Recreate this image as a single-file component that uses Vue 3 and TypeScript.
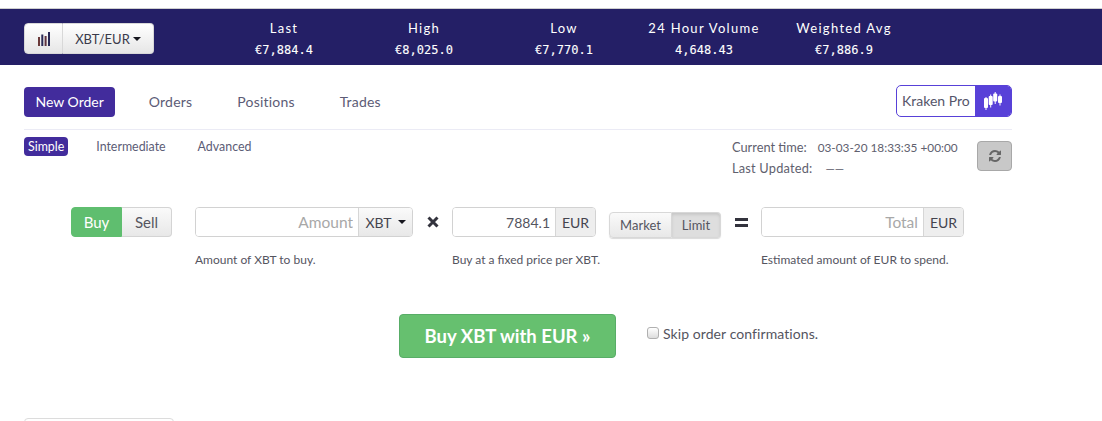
<template>
  <div class="page">
    <div class="ticker">
      <div class="pair-select">
        <button class="pair-chart">
          <svg viewBox="0 0 12 14" width="12" height="14">
            <rect x="0" y="5" width="2" height="9" fill="#6b3a3a" />
            <rect x="3.3" y="2.5" width="2" height="11.5" fill="#2a2a55" />
            <rect x="6.6" y="4" width="2" height="10" fill="#5f3440" />
            <rect x="10" y="0" width="2" height="14" fill="#2a2a55" />
          </svg>
        </button>
        <button class="pair-name">XBT/EUR<span class="caret"></span></button>
      </div>
      <div v-for="t in tickers" :key="t.label" class="stat">
        <div class="stat-label">{{ t.label }}</div>
        <div class="stat-value">{{ t.value }}</div>
      </div>
    </div>

    <div class="content">
      <div class="nav-row">
        <div class="tabs">
          <a v-for="(tab, i) in tabs" :key="tab" class="tab" :class="{ active: i === 0 }">{{ tab }}</a>
        </div>
        <div class="pro-link">
          <span class="pro-text">Kraken Pro</span>
          <span class="pro-icon">
            <svg viewBox="0 0 18 18" width="18" height="18" fill="#fff">
              <rect x="0" y="6" width="4" height="10" rx="1" />
              <rect x="1.5" y="5" width="1" height="13" />
              <rect x="4.7" y="4" width="4" height="9" rx="1" />
              <rect x="6.2" y="2.5" width="1" height="13" />
              <rect x="9.2" y="1.5" width="4" height="8" rx="1" />
              <rect x="10.7" y="0" width="1" height="12" />
              <rect x="14" y="4" width="4" height="7" rx="1" />
              <rect x="15.5" y="2.5" width="1" height="11" />
            </svg>
          </span>
        </div>
      </div>

      <div class="sub-row">
        <div class="levels">
          <a v-for="(lvl, i) in levels" :key="lvl" class="level" :class="{ active: i === 0 }">{{ lvl }}</a>
        </div>
        <div class="times">
          <div class="time-line"><span class="time-key">Current time:</span><span class="time-val">03-03-20 18:33:35 +00:00</span></div>
          <div class="time-line"><span class="time-key">Last Updated:</span><span class="time-val">——</span></div>
        </div>
        <button class="refresh">
          <svg viewBox="0 0 1792 1792" width="14" height="14" fill="#666">
            <path d="M1639 1056q0 5-1 7-64 268-268 434.5t-478 166.5q-146 0-282.5-55t-243.5-157l-129 129q-19 19-45 19t-45-19-19-45v-448q0-26 19-45t45-19h448q26 0 45 19t19 45-19 45l-137 137q71 66 161 102t187 36q134 0 250-65t186-179q11-17 53-117 8-23 30-23h192q13 0 22.5 9.5t9.5 22.5zm25-800v448q0 26-19 45t-45 19h-448q-26 0-45-19t-19-45 19-45l138-138q-148-137-349-137-134 0-250 65t-186 179q-11 17-53 117-8 23-30 23h-199q-13 0-22.5-9.5t-9.5-22.5v-7q65-268 270-434.5t480-166.5q146 0 284 55.5t245 156.5l130-129q19-19 45-19t45 19 19 45z" />
          </svg>
        </button>
      </div>

      <div class="form-row">
        <div class="side-toggle">
          <button class="side buy">Buy</button>
          <button class="side sell">Sell</button>
        </div>

        <div class="field amount-field">
          <div class="input-group">
            <input class="input" placeholder="Amount" />
            <button class="addon addon-select">XBT<span class="caret dark"></span></button>
          </div>
          <div class="help">Amount of XBT to buy.</div>
        </div>

        <div class="op">
          <svg viewBox="0 0 12 12" width="12" height="12">
            <path d="M1.5 1.5 L10.5 10.5 M10.5 1.5 L1.5 10.5" stroke="#33333d" stroke-width="3" fill="none" />
          </svg>
        </div>

        <div class="field price-field">
          <div class="input-group">
            <input class="input value" value="7884.1" />
            <span class="addon">EUR</span>
          </div>
          <div class="help">Buy at a fixed price per XBT.</div>
        </div>

        <div class="type-toggle">
          <button class="type">Market</button>
          <button class="type pressed">Limit</button>
        </div>

        <div class="op equals">
          <span></span>
          <span></span>
        </div>

        <div class="field total-field">
          <div class="input-group">
            <input class="input" placeholder="Total" />
            <span class="addon">EUR</span>
          </div>
          <div class="help">Estimated amount of EUR to spend.</div>
        </div>
      </div>

      <div class="submit-row">
        <button class="submit">Buy XBT with EUR »</button>
        <label class="skip">
          <input type="checkbox" class="skip-box" />
          <span>Skip order confirmations.</span>
        </label>
      </div>

      <div class="next-panel"></div>
    </div>
  </div>
</template>

<script setup lang="ts">
const tickers = [
  { label: 'Last', value: '€7,884.4' },
  { label: 'High', value: '€8,025.0' },
  { label: 'Low', value: '€7,770.1' },
  { label: '24 Hour Volume', value: '4,648.43' },
  { label: 'Weighted Avg', value: '€7,886.9' }
]

const tabs = ['New Order', 'Orders', 'Positions', 'Trades']
const levels = ['Simple', 'Intermediate', 'Advanced']
</script>

<style>
html,
body {
  margin: 0;
  background: #fff;
  overflow: hidden;
}
</style>

<style scoped>
.page {
  width: 1102px;
  height: 421px;
  overflow: hidden;
  padding-top: 8px;
  box-sizing: border-box;
  font-family: Lato, "Noto Sans", sans-serif;
  color: #55556a;
}

button {
  font-family: inherit;
  padding: 0;
  cursor: pointer;
}

/* ticker bar */
.ticker {
  height: 56px;
  border-top: 1px solid #cfcfcf;
  background: #241f66;
  display: flex;
  align-items: center;
  padding-left: 24px;
}

.pair-select {
  display: flex;
  width: 130px;
  height: 31px;
  margin-right: 60px;
  margin-top: 3px;
}

.pair-chart,
.pair-name {
  border: 1px solid #d8d8d8;
  background: linear-gradient(#fff, #e6e6e6);
  color: #3a3a4a;
}

.pair-chart {
  width: 39px;
  border-radius: 4px 0 0 4px;
  display: flex;
  align-items: center;
  justify-content: center;
}

.pair-name {
  flex: 1;
  border-left: 0;
  border-radius: 0 4px 4px 0;
  font-size: 13px;
  display: flex;
  align-items: center;
  justify-content: center;
}

.caret {
  display: inline-block;
  border-left: 4px solid transparent;
  border-right: 4px solid transparent;
  border-top: 4px solid #16161e;
  margin-left: 3px;
}

.stat {
  width: 140px;
  text-align: center;
  color: #fff;
  margin-top: 4px;
}

.stat-label {
  font-size: 13px;
  letter-spacing: 1.3px;
  line-height: 18px;
}

.stat-value {
  font-family: "DejaVu Sans Mono", "Liberation Mono", monospace;
  font-size: 12px;
  line-height: 18px;
  margin-top: 4px;
  -webkit-text-stroke: 0.1px #fff;
}

/* main content */
.content {
  width: 988px;
  margin-left: 24px;
}

.nav-row {
  display: flex;
  justify-content: space-between;
  align-items: flex-start;
  height: 65px;
  padding-top: 20px;
  box-sizing: border-box;
  border-bottom: 1px solid #ebebf5;
}

.tabs {
  display: flex;
  gap: 22px;
  padding-top: 2px;
}

.tab {
  height: 30px;
  line-height: 30px;
  padding: 0 11.5px;
  border-radius: 4px;
  font-size: 14px;
  letter-spacing: 0.2px;
  color: #5c5c76;
}

.tab.active {
  background: #422c9c;
  color: #fff;
  letter-spacing: 0;
}

.pro-link {
  display: flex;
  height: 32px;
  width: 116px;
  box-sizing: border-box;
  border: 1px solid #5841d8;
  border-radius: 5px;
  overflow: hidden;
}

.pro-text {
  flex: 1;
  line-height: 30px;
  padding-left: 5px;
  font-size: 14px;
  color: #55556a;
}

.pro-icon {
  width: 36px;
  background: #5841d8;
  display: flex;
  align-items: center;
  justify-content: center;
}

.sub-row {
  display: flex;
  align-items: flex-start;
  padding-top: 7px;
  height: 77px;
  box-sizing: border-box;
}

.levels {
  display: flex;
  gap: 24px;
  flex: 1;
}

.level {
  font-size: 12.4px;
  line-height: 19px;
  padding: 0 4px;
  border-radius: 4px;
  color: #5c5c76;
}

.level.active {
  background: #422c9c;
  color: #fff;
}

.times {
  font-size: 12.8px;
  line-height: 21px;
  color: #60606e;
  width: 245px;
}

.time-key {
  margin-right: 11px;
}

.time-line:last-child .time-key {
  margin-right: 13px;
  letter-spacing: 0.2px;
}

.time-val {
  font-size: 11.8px;
}

.refresh {
  width: 35px;
  height: 30px;
  margin-top: 4px;
  border: 1px solid #a8a8a8;
  border-radius: 4px;
  background: #c8c8c8;
  display: flex;
  align-items: center;
  justify-content: center;
}

/* order form */
.form-row {
  display: flex;
  align-items: flex-start;
  padding-left: 47px;
}

.side-toggle {
  display: flex;
  width: 101px;
  height: 30px;
  margin-right: 23px;
}

.side {
  font-size: 15px;
  border: 1px solid #d4d4d4;
}

.side.buy {
  width: 51px;
  background: #5fbe6f;
  border-color: #5fbe6f;
  color: #fff;
  border-radius: 4px 0 0 4px;
}

.side.sell {
  flex: 1;
  border-left: 0;
  background: linear-gradient(#fafafa, #e8e8e8);
  color: #55555f;
  border-radius: 0 4px 4px 0;
}

.input-group {
  display: flex;
  height: 30px;
  box-sizing: border-box;
  border: 1px solid #d2d2d2;
  border-radius: 4px;
  overflow: hidden;
}

.input {
  flex: 1;
  min-width: 0;
  border: 0;
  outline: 0;
  padding: 0 5px;
  text-align: right;
  font-family: inherit;
  font-size: 15.5px;
  color: #55555f;
  background: #fff;
}

.input.value {
  font-size: 14px;
}

.input::placeholder {
  color: #a8a8a8;
  opacity: 1;
}

.addon {
  width: 39px;
  flex: none;
  border: 0;
  border-left: 1px solid #d6d6d6;
  background: #eeeeee;
  font-size: 14px;
  color: #44444e;
  display: flex;
  align-items: center;
  justify-content: center;
}

.addon-select {
  width: 54px;
  background: linear-gradient(#fafafa, #e8e8e8);
}

.caret.dark {
  margin-left: 6px;
}

.help {
  font-size: 12px;
  color: #55555f;
  margin-top: 15px;
  line-height: 16px;
  white-space: nowrap;
}

.amount-field {
  width: 218px;
}

.price-field {
  width: 144px;
}

.total-field {
  width: 203px;
}

.op {
  width: 39px;
  height: 30px;
  display: flex;
  align-items: center;
  justify-content: center;
}

.type-toggle {
  display: flex;
  width: 112px;
  height: 26px;
  margin: 5px 0 0 13px;
  box-shadow: 0 1px 1px rgba(0, 0, 0, 0.15);
  border-radius: 4px;
}

.type {
  font-size: 13px;
  border: 1px solid #d8d8d8;
  color: #55555f;
}

.type:first-child {
  width: 63px;
  border-radius: 4px 0 0 4px;
  background: linear-gradient(#fafafa, #e8e8e8);
}

.type.pressed {
  flex: 1;
  border-left: 0;
  border-radius: 0 4px 4px 0;
  background: #dedede;
  box-shadow: inset 0 2px 3px rgba(0, 0, 0, 0.1);
}

.equals {
  width: 40px;
  flex-direction: column;
  gap: 3px;
}

.equals span {
  width: 13px;
  height: 3px;
  background: #33333d;
}

.submit-row {
  display: flex;
  align-items: flex-start;
  padding-left: 375px;
  margin-top: 46px;
}

.submit {
  width: 217px;
  height: 44px;
  border: 1px solid #58ad67;
  border-radius: 4px;
  background: #66c06f;
  color: #fff;
  font-size: 18.5px;
  font-weight: 700;
}

.skip {
  display: flex;
  align-items: flex-start;
  margin: 13px 0 0 31px;
  font-size: 14px;
  line-height: 14px;
  letter-spacing: 0.08px;
  color: #55555f;
}

.skip-box {
  appearance: none;
  width: 12px;
  height: 12px;
  margin: 0 4px 0 0;
  border: 1px solid #b0b0b0;
  border-radius: 3px;
  background: linear-gradient(#fff, #dcdcdc);
  box-sizing: border-box;
}

.next-panel {
  width: 150px;
  height: 20px;
  margin-top: 60px;
  border: 1px solid #dcdcdc;
  border-radius: 4px;
  box-sizing: border-box;
}
</style>
